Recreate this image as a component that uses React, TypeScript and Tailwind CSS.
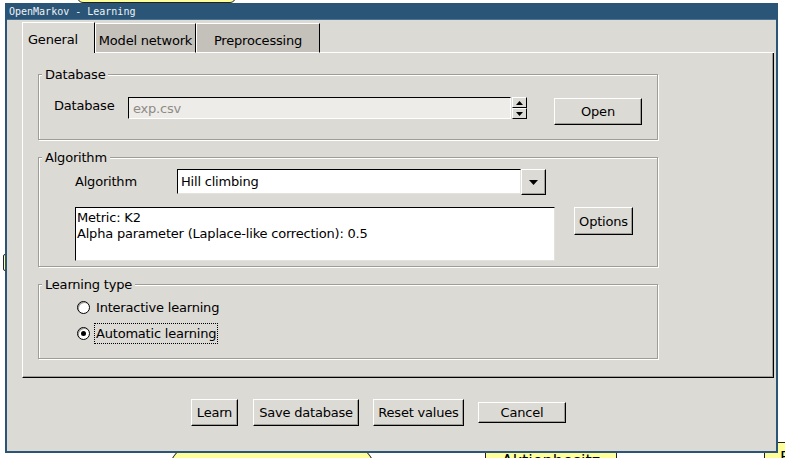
import React from "react";

function Btn({ w, h, children, className = "" }: { w: string; h: string; children: React.ReactNode; className?: string }) {
  return (
    <div
      className={`${w} ${h} ${className} flex items-center justify-center bg-[#dcdad5] border border-t-white border-l-white border-r-black border-b-black shadow-[inset_-1px_-1px_0_#a09d96] leading-[15px]`}
    >
      {children}
    </div>
  );
}

function Group({ title, h, className = "", children }: { title: string; h: string; className?: string; children: React.ReactNode }) {
  return (
    <div className={`${h} ${className} w-[620px] flex flex-col border border-[#a09d96] shadow-[inset_1px_1px_0_#ffffff,1px_1px_0_#ffffff]`}>
      <div className="self-start -mt-[8px] ml-[3px] px-[3px] h-[15px] leading-[15px] bg-[#dcdad5]">{title}</div>
      {children}
    </div>
  );
}

function Radio({ checked }: { checked?: boolean }) {
  return (
    <div className="w-[13px] h-[13px] rounded-full border border-black bg-white flex items-center justify-center shadow-[inset_1px_1px_0_#a09d96]">
      {checked && <div className="w-[5px] h-[5px] rounded-full bg-black" />}
    </div>
  );
}

export default function App() {
  return (
    <div className="relative w-[785px] h-[458px] overflow-hidden bg-white font-['DejaVu_Sans',sans-serif] text-[13px] tracking-[-0.2px] text-black">
      {/* network nodes behind the dialog */}
      <div className="absolute left-[77px] top-[-20px] w-[159px] h-[23px] rounded-b-[6px] border border-[#222] bg-[#ffff99]" />
      <div className="absolute left-[3px] top-[254px] w-[24px] h-[17px] rounded-l-[2px] border border-[#222] bg-[#ffff99]" />
      <div className="absolute left-[167px] top-[420px] w-[210px] h-[110px] rounded-[50%] border border-[#222] bg-[#ffff99]" />
      <div className="absolute left-[485px] top-[440px] w-[132px] h-[40px] rounded-[8px] border border-[#222] bg-[#ffff99] flex justify-center pt-[10px] text-[16px] tracking-normal leading-[19px]">
        Aktienbesitz
      </div>
      <div className="absolute left-[764px] top-[442px] w-[60px] h-[30px] border border-[#222] bg-[#ffff99] pl-[15px] pt-[5px] text-[16px] tracking-normal leading-[19px]">
        Fi
      </div>

      {/* dialog window */}
      <div className="absolute left-[5px] top-[3px] w-[773px] h-[450px] flex flex-col bg-[#dcdad5] border-x-2 border-b-2 border-[#2a5577]">
        <div className="h-[17px] shrink-0 bg-[#2a5577] border-b border-[#4d7394] pl-[2px] pt-[2px] font-['DejaVu_Sans_Mono',monospace] text-[10px] leading-[13px] tracking-normal text-[#eef2f6]">
          OpenMarkov - Learning
        </div>

        <div className="flex flex-col pl-[15px] pr-[2px] pt-[2px]">
          {/* tabs */}
          <div className="flex items-end h-[31px]">
            <div className="w-[73px] h-[31px] shrink-0 border-l border-t border-r border-l-white border-t-white border-r-black bg-[#dcdad5] pl-[5px] pt-[9px] leading-[15px]">
              General
            </div>
            <div className="w-[101px] h-[30px] shrink-0 border border-l-white border-t-white border-r-black border-b-white bg-[#c4c1ba] flex justify-center pt-[9px] leading-[15px] whitespace-nowrap">
              Model network
            </div>
            <div className="w-[124px] h-[30px] shrink-0 border border-l-white border-t-white border-r-black border-b-white bg-[#c4c1ba] flex justify-center pt-[9px] leading-[15px]">
              Preprocessing
            </div>
            <div className="flex-1 h-px bg-white" />
          </div>

          {/* tab panel */}
          <div className="h-[325px] flex flex-col border-l border-r border-b border-l-white border-r-black border-b-black shadow-[inset_-1px_-1px_0_#a09d96] pl-[15px] pt-[21px]">
            <Group title="Database" h="h-[66px]">
              <div className="flex items-start mt-[15px]">
                <div className="ml-[15px] w-[74px] mt-[1px] leading-[15px]">Database</div>
                <div className="w-[383px] h-[22px] border border-t-black border-l-black border-r-white border-b-white bg-[#eeece8] flex items-center pl-[4px] leading-[15px] text-[#8d8b86]">
                  exp.csv
                </div>
                <div className="ml-[1px] w-[15px] h-[22px] flex flex-col">
                  <div className="h-[11px] border border-t-white border-l-white border-r-black border-b-black bg-[#dcdad5] flex items-center justify-center">
                    <svg width="7" height="4" viewBox="0 0 7 4"><path d="M3.5 0 L7 4 L0 4 Z" fill="#000" /></svg>
                  </div>
                  <div className="h-[11px] border border-t-white border-l-white border-r-black border-b-black bg-[#dcdad5] flex items-center justify-center">
                    <svg width="7" height="4" viewBox="0 0 7 4"><path d="M0 0 L7 0 L3.5 4 Z" fill="#000" /></svg>
                  </div>
                </div>
                <Btn w="w-[88px]" h="h-[27px]" className="ml-[27px] mt-[1px]">Open</Btn>
              </div>
            </Group>

            <Group title="Algorithm" h="h-[110px]" className="mt-[17px]">
              <div className="flex items-start mt-[4px]">
                <div className="ml-[36px] w-[102px] mt-[5px] leading-[15px]">Algorithm</div>
                <div className="w-[344px] h-[25px] border border-t-black border-l-black border-r-[#e4e2de] border-b-[#e4e2de] bg-white flex items-center pl-[3px] leading-[15px]">
                  Hill climbing
                </div>
                <div className="w-[25px] h-[26px] border border-t-white border-l-white border-r-black border-b-black shadow-[inset_-1px_-1px_0_#a09d96] bg-[#dcdad5] flex items-center justify-center">
                  <svg width="9" height="5" viewBox="0 0 9 5"><path d="M0 0 L9 0 L4.5 5 Z" fill="#000" /></svg>
                </div>
              </div>
              <div className="flex items-start mt-[12px]">
                <div className="ml-[36px] w-[480px] h-[54px] border border-t-black border-l-black border-r-[#e4e2de] border-b-[#e4e2de] bg-white pl-[1px] pt-[2px] leading-[16px]">
                  <div>Metric: K2</div>
                  <div>Alpha parameter (Laplace-like correction): 0.5</div>
                </div>
                <Btn w="w-[59px]" h="h-[28px]" className="ml-[19px]">Options</Btn>
              </div>
            </Group>

            <Group title="Learning type" h="h-[75px]" className="mt-[17px]">
              <div className="flex items-center h-[21px] mt-[5px]">
                <div className="ml-[38px]"><Radio /></div>
                <div className="ml-[4px] h-[21px] border border-transparent px-[1px] leading-[19px]">Interactive learning</div>
              </div>
              <div className="flex items-center h-[21px] mt-[5px]">
                <div className="ml-[38px]"><Radio checked /></div>
                <div className="ml-[4px] h-[21px] border border-dotted border-black px-[1px] leading-[19px]">Automatic learning</div>
              </div>
            </Group>
          </div>

          {/* dialog buttons */}
          <div className="flex items-center h-[27px] mt-[21px] ml-[169px]">
            <Btn w="w-[47px]" h="h-[27px]">Learn</Btn>
            <Btn w="w-[106px]" h="h-[27px]" className="ml-[15px]">Save database</Btn>
            <Btn w="w-[91px]" h="h-[27px]" className="ml-[14px]">Reset values</Btn>
            <Btn w="w-[88px]" h="h-[21px]" className="ml-[14px]">Cancel</Btn>
          </div>
        </div>
      </div>
    </div>
  );
}
